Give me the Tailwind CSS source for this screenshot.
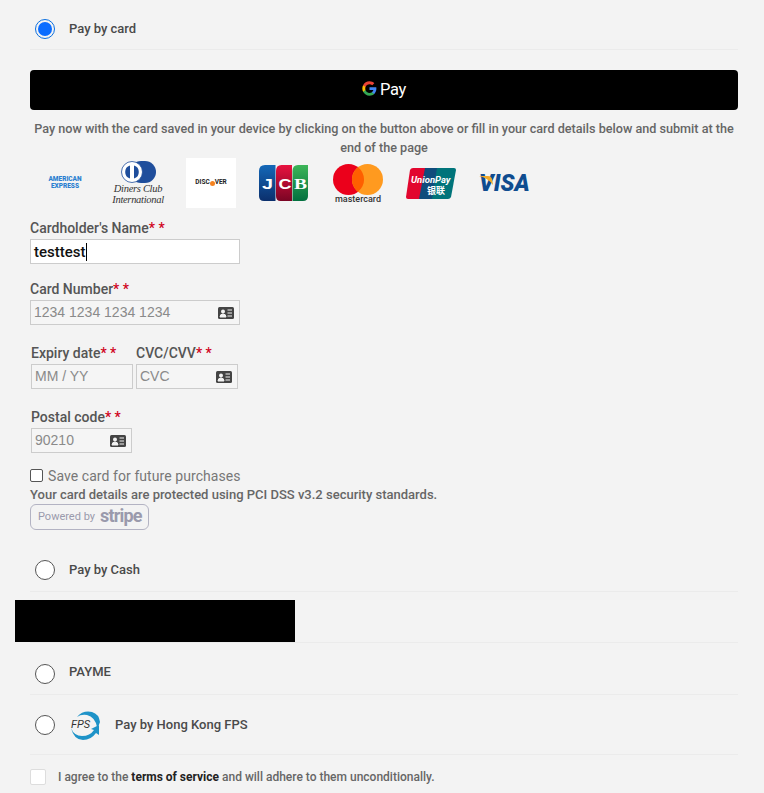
<!DOCTYPE html>
<html lang="en">
<head>
  <meta charset="UTF-8">
  <title>Payment</title>
  <script src="https://cdn.jsdelivr.net/npm/@tailwindcss/browser@4"></script>
</head>
<body class="bg-[#f3f3f3] font-['Roboto',sans-serif] text-[#555] overflow-hidden h-[793px]">
  <div class="pl-[30px] pr-[26px]">

    <!-- Pay by card -->
    <div class="h-[50px] pt-[19px] border-b border-[#ebebeb] flex items-start">
      <span class="ml-[5px] w-5 h-5 rounded-full border border-[#0b6fe0] flex items-center justify-center shrink-0">
        <span class="w-[14px] h-[14px] rounded-full bg-[#0a6cff]"></span>
      </span>
      <span class="ml-[14px] text-[13px] leading-5 font-medium text-[#4a4a4a]">Pay by card</span>
    </div>

    <!-- Google Pay -->
    <div class="mt-5 h-10 bg-black rounded-[4px] flex items-center justify-center gap-[3px] pb-[3px]">
      <svg width="15" height="15" viewBox="0 0 48 48">
        <path fill="#4285F4" d="M46 24.500c0-1.600-.1-3.100-.4-4.500H24v8.700h12.400c-.5 2.800-2.100 5.200-4.500 6.800v5.700h7.300C43.500 36.700 46 31.100 46 24.500z"/>
        <path fill="#34A853" d="M24 47c6.200 0 11.400-2 15.200-5.500l-7.300-5.700c-2 1.400-4.700 2.200-7.900 2.200-6 0-11.100-4.100-12.900-9.500H3.500v5.900C7.300 41.900 15 47 24 47z"/>
        <path fill="#FBBC04" d="M11.100 28.500c-.5-1.400-.7-2.900-.7-4.500s.3-3.100.7-4.500v-5.900H3.500C2 16.700 1 20.200 1 24s1 7.300 2.500 10.400l7.600-5.900z"/>
        <path fill="#EA4335" d="M24 10c3.400 0 6.400 1.200 8.800 3.400l6.500-6.500C35.400 3.300 30.200 1 24 1 15 1 7.300 6.100 3.500 13.600l7.600 5.900C12.900 14.100 18 10 24 10z"/>
      </svg>
      <span class="mt-[3px] text-white text-[16.500px] leading-none font-normal tracking-[-0.4px]">Pay</span>
    </div>

    <p class="mt-[9px] pb-[1px] text-center text-[12.63px] leading-[19px] font-medium text-[#666]">Pay now with the card saved in your device by clicking on the button above or fill in your card details below and submit at the end of the page</p>

    <!-- Card logos -->
    <div class="flex items-center h-[50px]">
      <div class="w-[70px] text-center text-[#2a7fd0] text-[6.500px] leading-[7px] font-black">AMERICAN<br>EXPRESS</div>
      <div class="w-[76px] mr-[10px] flex flex-col items-center">
        <svg width="35" height="22" viewBox="0 0 35 22">
          <rect x="9" y="0" width="26" height="22" rx="11" fill="#1f4e9c"/>
          <circle cx="11" cy="11" r="10.500" fill="#fff" stroke="#1f4e9c" stroke-width="0.800"/>
          <path d="M9 4.500a6.800 6.800 0 0 0 0 13zM13 4.500a6.800 6.800 0 0 1 0 13z" fill="#1f4e9c"/>
        </svg>
        <div class="font-['Liberation_Serif',serif] italic text-[10.500px] leading-[11px] tracking-[-0.3px] text-[#333] text-center">Diners Club<br>International</div>
      </div>
      <div class="w-[50px] h-[50px] bg-white flex items-center justify-center text-[6.500px] font-bold text-[#222]">DISC<span class="w-[5px] h-[5px] rounded-full bg-[#f58220]"></span>VER</div>
      <svg class="ml-[23px]" width="49" height="36" viewBox="0 0 49 36">
        <defs>
          <linearGradient id="jcbBlue" x1="0" y1="0" x2="0" y2="1"><stop offset="0" stop-color="#1468b8"/><stop offset="1" stop-color="#0b2f6c"/></linearGradient>
          <linearGradient id="jcbRed" x1="0" y1="0" x2="0" y2="1"><stop offset="0" stop-color="#e8123f"/><stop offset="1" stop-color="#7a0524"/></linearGradient>
          <linearGradient id="jcbGreen" x1="0" y1="0" x2="0" y2="1"><stop offset="0" stop-color="#3db558"/><stop offset="1" stop-color="#03703f"/></linearGradient>
        </defs>
        <path d="M6 0h10.500v36H5q-5 0-5-5V6q0-6 6-6z" fill="url(#jcbBlue)"/>
        <path d="M22.500 0h10.500v36H21.500q-4.500 0-4.500-5V6q0-6 5.500-6z" fill="url(#jcbRed)"/>
        <path d="M39 0h10v31q0 5-5 5H33.500V6q0-6 5.500-6z" fill="url(#jcbGreen)"/>
        <text x="3" y="24" fill="#fff" font-size="14" font-weight="700" font-family="Liberation Sans" textLength="11" lengthAdjust="spacingAndGlyphs">J</text>
        <text x="19.500" y="24" fill="#fff" font-size="14" font-weight="700" font-family="Liberation Sans" textLength="13" lengthAdjust="spacingAndGlyphs">C</text>
        <text x="35" y="24" fill="#fff" font-size="14" font-weight="700" font-family="Liberation Serif" textLength="13" lengthAdjust="spacingAndGlyphs">B</text>
      </svg>
      <div class="ml-[25px] mt-[2px] flex flex-col items-center w-[50px]">
        <svg width="50" height="31" viewBox="0 0 50 31">
          <circle cx="15.500" cy="15.500" r="15.500" fill="#eb001b"/>
          <circle cx="34.500" cy="15.500" r="15.500" fill="#ff9a1f"/>
          <path d="M25 3.200a15.500 15.500 0 0 1 0 24.600a15.500 15.500 0 0 1 0-24.600z" fill="#ff5f00"/>
        </svg>
        <span class="text-[9px] leading-[9px] font-medium text-[#333]">mastercard</span>
      </div>
      <svg class="ml-[23px]" width="50" height="31" viewBox="0 0 50 31">
        <path d="M7 0h14l-5 31H2q-2 0-2-2L4 2q1-2 3-2z" fill="#e2062e"/>
        <path d="M19 0h15l-5 31H13z" fill="#0f4c7c"/>
        <path d="M31 0h17q2 0 2 2l-5 27q-1 2-3 2H26z" fill="#00747a"/>
        <text x="5" y="15" fill="#fff" font-size="9.500" font-weight="700" font-style="italic" font-family="Roboto">UnionPay</text>
        <text x="21" y="26" fill="#fff" font-size="9" font-weight="700" font-family="Noto Sans CJK SC">银联</text>
      </svg>
      <div class="relative ml-[23px] w-[50px] text-center text-[23px] leading-none font-black italic text-[#0f4c8f]">VISA
        <svg class="absolute left-0 top-[4px]" width="14" height="9" viewBox="0 0 14 9"><path d="M0 0h9q3 0 4 3l1 6Q9 2 0 0z" fill="#f0a92a"/></svg>
      </div>
    </div>

    <!-- Form -->
    <div class="text-[14px] font-medium text-[#555]">
      <label class="block mt-[11px] leading-[18px]">Cardholder's Name<span class="text-[#d0021b]">* *</span></label>
      <div class="mt-[2px] w-[210px] h-[25px] bg-white border border-[#ccc] flex items-center pl-[3px] pt-[1px] text-[15px] font-medium text-[#111]">testtest<span class="w-px h-[18px] bg-black"></span></div>

      <label class="block mt-4 leading-[18px]">Card Number<span class="text-[#d0021b]">* *</span></label>
      <div class="mt-[2px] w-[210px] h-[25px] bg-[#f5f5f5] border border-[#ccc] flex items-center justify-between pl-[3px] pr-[5px] font-['Liberation_Sans',sans-serif] text-[14px] font-normal text-[#8a8a8a]">1234 1234 1234 1234
        <svg width="16" height="12" viewBox="0 0 16 12"><rect width="16" height="12" rx="1.500" fill="#444"/><circle cx="5" cy="4.500" r="2" fill="#f3f3f3"/><path d="M2 10q0-3 3-3t3 3zM9.500 3H14M9.500 6H14M9.500 9H14" fill="#f3f3f3" stroke="#f3f3f3"/></svg>
      </div>

      <div class="mt-[19px] ml-px flex gap-[3px]">
        <div class="w-[102px]">
          <label class="block leading-[18px]">Expiry date<span class="text-[#d0021b]">* *</span></label>
          <div class="mt-[2px] h-[25px] bg-[#f5f5f5] border border-[#ccc] flex items-center pl-[3px] font-['Liberation_Sans',sans-serif] text-[14px] font-normal text-[#8a8a8a]">MM / YY</div>
        </div>
        <div class="w-[102px]">
          <label class="block leading-[18px]">CVC/CVV<span class="text-[#d0021b]">* *</span></label>
          <div class="mt-[2px] h-[25px] bg-[#f5f5f5] border border-[#ccc] flex items-center justify-between pl-[3px] pr-[5px] font-['Liberation_Sans',sans-serif] text-[14px] font-normal text-[#8a8a8a]">CVC
            <svg width="16" height="12" viewBox="0 0 16 12"><rect width="16" height="12" rx="1.500" fill="#444"/><circle cx="5" cy="4.500" r="2" fill="#f3f3f3"/><path d="M2 10q0-3 3-3t3 3zM9.500 3H14M9.500 6H14M9.500 9H14" fill="#f3f3f3" stroke="#f3f3f3"/></svg>
          </div>
        </div>
      </div>

      <label class="block mt-[19px] ml-px leading-[18px]">Postal code<span class="text-[#d0021b]">* *</span></label>
      <div class="mt-[2px] ml-px w-[101px] h-[25px] bg-[#f5f5f5] border border-[#ccc] flex items-center justify-between pl-[3px] pr-[5px] font-['Liberation_Sans',sans-serif] text-[14px] font-normal text-[#8a8a8a]">90210
        <svg width="16" height="12" viewBox="0 0 16 12"><rect width="16" height="12" rx="1.500" fill="#444"/><circle cx="5" cy="4.500" r="2" fill="#f3f3f3"/><path d="M2 10q0-3 3-3t3 3zM9.500 3H14M9.500 6H14M9.500 9H14" fill="#f3f3f3" stroke="#f3f3f3"/></svg>
      </div>

      <div class="mt-3 flex items-center h-5">
        <span class="w-[13px] h-[13px] bg-white border border-[#555] rounded-[2px]"></span>
        <span class="ml-[5px] pt-[2px] text-[14px] tracking-[0.07px] font-normal text-[#777]">Save card for future purchases</span>
      </div>
      <p class="text-[13px] leading-[20px] text-[#666]">Your card details are protected using PCI DSS v3.2 security standards.</p>
      <div class="w-[119px] h-[26px] -mt-[1px] border border-[#b3b3c3] rounded-[6px] flex items-center pl-[7px] gap-[5px] text-[#9a9aac]">
        <span class="text-[11px] font-normal">Powered by</span>
        <span class="text-[18px] font-bold leading-none tracking-[-0.8px] -mt-[2px]">stripe</span>
      </div>
    </div>

    <!-- Pay by Cash -->
    <div class="mt-[30px] h-[32px] border-b border-[#ebebeb] flex items-start">
      <span class="ml-[5px] w-5 h-5 rounded-full border border-[#555] bg-white shrink-0"></span>
      <span class="ml-[14px] text-[13px] leading-5 font-medium text-[#4a4a4a]">Pay by Cash</span>
    </div>

    <!-- Hidden option -->
    <div class="h-[51px] border-b border-[#ebebeb] flex items-end">
      <div class="-ml-[15px] w-[280px] h-[42px] bg-black"></div>
    </div>

    <!-- PAYME -->
    <div class="h-[52px] pt-[21px] border-b border-[#ebebeb] flex items-start">
      <span class="ml-[5px] w-5 h-5 rounded-full border border-[#555] bg-white shrink-0"></span>
      <span class="ml-[14px] text-[13px] leading-4 font-medium text-[#4a4a4a]">PAYME</span>
    </div>

    <!-- FPS -->
    <div class="h-[60px] border-b border-[#ebebeb] flex items-center pt-[1px]">
      <span class="ml-[5px] w-5 h-5 rounded-full border border-[#555] bg-white shrink-0"></span>
      <svg class="ml-[15px]" width="30" height="29" viewBox="0 0 30 29">
        <path d="M7 6Q13-1 22 1q7 2 8 10-1 4-3 5-2-10-10-12-6-1-10 2z" fill="#1e93c8"/>
        <path d="M1 17q3 8 11 8 8 0 12-6l-3-1 8-4v10l-3-2q-5 7-13 7Q4 29 1 17z" fill="#1e93c8"/>
        <text x="1" y="17" fill="#333" font-size="11" font-style="italic" font-family="Roboto">FPS</text>
      </svg>
      <span class="ml-[15px] text-[13px] font-medium text-[#4a4a4a]">Pay by Hong Kong FPS</span>
    </div>

    <!-- Terms -->
    <div class="mt-[13px] flex items-center text-[12px] font-medium text-[#666]">
      <span class="w-4 h-4 bg-white border border-[#ddd] rounded-[2px]"></span>
      <span class="ml-[12px]">I agree to the <b class="font-bold text-[#222]">terms of service</b> and will adhere to them unconditionally.</span>
    </div>
  </div>
</body>
</html>
